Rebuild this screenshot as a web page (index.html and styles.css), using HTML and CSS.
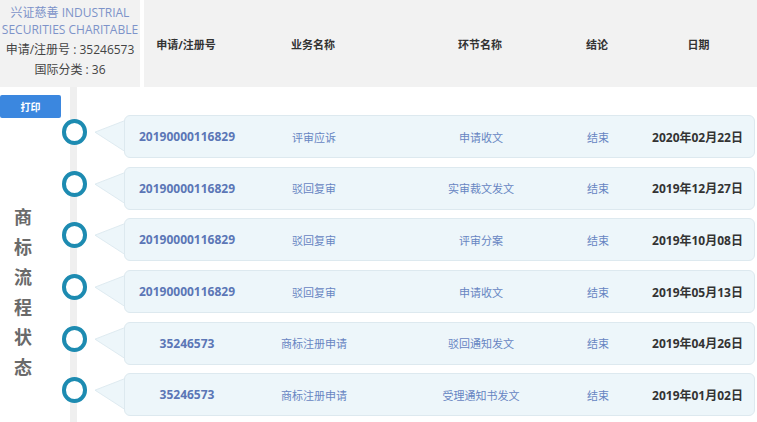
FILE: index.html
```html
<!DOCTYPE html>
<html lang="zh-CN">
<head>
  <meta charset="UTF-8">
  <meta name="viewport" content="width=device-width, initial-scale=1.0">
  <title>商标流程状态</title>
  <link rel="stylesheet" href="styles.css">
</head>
<body>

  <div class="top">
    <div class="info">
      <div class="info-name">兴证慈善 INDUSTRIAL SECURITIES CHARITABLE</div>
      <div>申请/注册号 : 35246573</div>
      <div>国际分类 : 36</div>
    </div>
    <div class="head-row">
      <div>申请/注册号</div>
      <div>业务名称</div>
      <div>环节名称</div>
      <div>结论</div>
      <div class="col-date">日期</div>
    </div>
  </div>

  <div class="main">
    <div class="side">
      <button class="print">打印</button>
      <div class="side-title">商标流程状态</div>
    </div>

    <div class="timeline">
      <div class="row">
        <div class="marker">
          <span class="dot"></span>
          <svg class="pointer" width="31" height="32" viewBox="0 0 31 32"><polygon points="0,12 31,0 31,32" /></svg>
        </div>
        <div class="card">
          <div class="num">20190000116829</div>
          <div>评审应诉</div>
          <div>申请收文</div>
          <div>结束</div>
          <div class="col-date date">2020年02月22日</div>
        </div>
      </div>
      <div class="row">
        <div class="marker">
          <span class="dot"></span>
          <svg class="pointer" width="31" height="32" viewBox="0 0 31 32"><polygon points="0,12 31,0 31,32" /></svg>
        </div>
        <div class="card">
          <div class="num">20190000116829</div>
          <div>驳回复审</div>
          <div>实审裁文发文</div>
          <div>结束</div>
          <div class="col-date date">2019年12月27日</div>
        </div>
      </div>
      <div class="row">
        <div class="marker">
          <span class="dot"></span>
          <svg class="pointer" width="31" height="32" viewBox="0 0 31 32"><polygon points="0,12 31,0 31,32" /></svg>
        </div>
        <div class="card">
          <div class="num">20190000116829</div>
          <div>驳回复审</div>
          <div>评审分案</div>
          <div>结束</div>
          <div class="col-date date">2019年10月08日</div>
        </div>
      </div>
      <div class="row">
        <div class="marker">
          <span class="dot"></span>
          <svg class="pointer" width="31" height="32" viewBox="0 0 31 32"><polygon points="0,12 31,0 31,32" /></svg>
        </div>
        <div class="card">
          <div class="num">20190000116829</div>
          <div>驳回复审</div>
          <div>申请收文</div>
          <div>结束</div>
          <div class="col-date date">2019年05月13日</div>
        </div>
      </div>
      <div class="row">
        <div class="marker">
          <span class="dot"></span>
          <svg class="pointer" width="31" height="32" viewBox="0 0 31 32"><polygon points="0,12 31,0 31,32" /></svg>
        </div>
        <div class="card">
          <div class="num">35246573</div>
          <div>商标注册申请</div>
          <div>驳回通知发文</div>
          <div>结束</div>
          <div class="col-date date">2019年04月26日</div>
        </div>
      </div>
      <div class="row">
        <div class="marker">
          <span class="dot"></span>
          <svg class="pointer" width="31" height="32" viewBox="0 0 31 32"><polygon points="0,12 31,0 31,32" /></svg>
        </div>
        <div class="card">
          <div class="num">35246573</div>
          <div>商标注册申请</div>
          <div>受理通知书发文</div>
          <div>结束</div>
          <div class="col-date date">2019年01月02日</div>
        </div>
      </div>
    </div>
  </div>

</body>
</html>
```

FILE: styles.css
```css
:root {
  font-size: 12px;
}

body, html {
  margin: 0;
  padding: 0;
  box-sizing: border-box;
  height: 100%;
  background: #fff;
  font-family: "Open Sans", "Noto Sans CJK SC", sans-serif;
  overflow: hidden;
}

.top {
  display: flex;
  gap: 4px;
  height: 87px;
}

.info {
  width: 140px;
  background-color: #f2f2f2;
  text-align: center;
  color: #444;
  font-size: 12px;
  line-height: 20px;
  padding-top: 4px;
}

.info-name {
  color: #7d93c9;
  line-height: 17px;
  margin-bottom: 2px;
}

.head-row {
  flex: 1;
  background-color: #f2f2f2;
  display: grid;
  grid-template-columns: 84px 170px 164px 70px 1fr;
  align-items: center;
  text-align: center;
  font-size: 11px;
  font-weight: bold;
  color: #333;
}

.head-row .col-date {
  padding-left: 8px;
}

.main {
  display: flex;
  height: 335px;
}

.side {
  width: 60px;
  display: flex;
  flex-direction: column;
}

.print {
  margin-top: 8px;
  width: 61px;
  height: 23px;
  border: none;
  border-radius: 2px;
  background-color: #3b87df;
  color: #fff;
  font-family: inherit;
  font-size: 10px;
  font-weight: bold;
  padding: 0;
}

.side-title {
  width: 18px;
  margin: 84px 0 0 14px;
  font-size: 18px;
  font-weight: bold;
  line-height: 30px;
  color: #6a6a6a;
}

.timeline {
  flex: 1;
  padding-top: 28px;
  display: flex;
  flex-direction: column;
  gap: 8.7px;
  background: linear-gradient(to right, transparent 10px, #efefef 10px, #efefef 17px, transparent 17px);
}

.row {
  display: flex;
  height: 43px;
}

.marker {
  width: 65px;
  flex-shrink: 0;
  display: flex;
  align-items: flex-start;
}

.dot {
  width: 18px;
  height: 18px;
  margin: 4px 0 0 2px;
  border: 4px solid #1d8bb1;
  border-radius: 50%;
  background-color: #fff;
}

.pointer {
  margin: 5px 0 0 8px;
}

.pointer polygon {
  fill: #edf6fa;
  stroke: #dde9ef;
  stroke-width: 1;
}

.card {
  flex: 1;
  margin-right: 2px;
  margin-left: -1px;
  background-color: #edf6fa;
  border: 1px solid #dde9ef;
  border-radius: 6px;
  display: grid;
  grid-template-columns: 124px 130px 204px 30px 1fr;
  align-items: center;
  text-align: center;
  font-size: 11px;
  color: #6785c2;
}

.card .num {
  font-size: 12px;
  font-weight: bold;
  color: #5b76b6;
}

.card .col-date {
  padding-left: 28px;
}

.date {
  font-size: 12px;
  font-weight: bold;
  color: #333;
}
```
